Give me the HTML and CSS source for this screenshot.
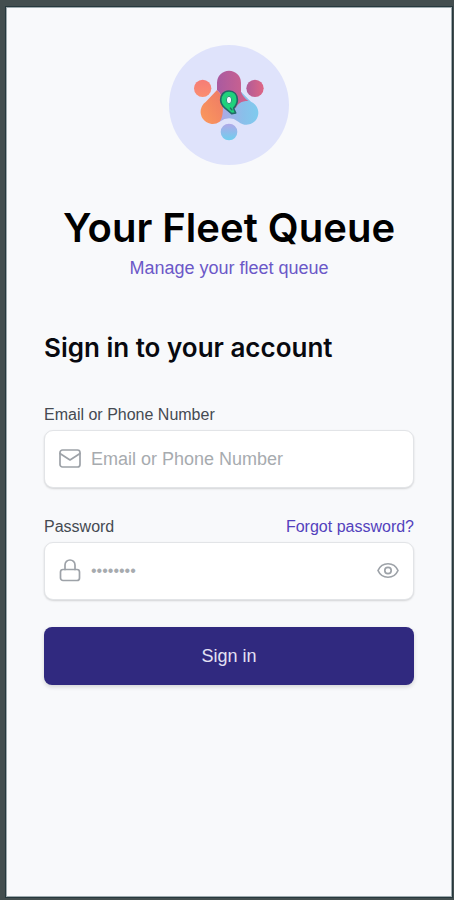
FILE: index.html
```html
<!DOCTYPE html>
<html lang="en">
<head>
<meta charset="utf-8">
<meta name="viewport" content="width=device-width, initial-scale=1">
<title>Your Fleet Queue</title>
<link rel="stylesheet" href="styles.css">
</head>
<body>
<main class="screen">
  <header class="brand">
    <svg class="logo" viewBox="30 30 360 360" aria-hidden="true">
      <defs>
        <linearGradient id="pink" x1="0" y1="0" x2="1" y2="0"><stop offset="0" stop-color="#a95aa0"/><stop offset="1" stop-color="#d0628c"/></linearGradient>
        <linearGradient id="orange" x1="1" y1="0" x2="0" y2="1"><stop offset="0" stop-color="#ee7966"/><stop offset="1" stop-color="#fb9a5c"/></linearGradient>
        <linearGradient id="blue" x1="0" y1="0" x2="1" y2="0"><stop offset="0" stop-color="#b0a6e6"/><stop offset=".6" stop-color="#8abfea"/><stop offset="1" stop-color="#7fcbee"/></linearGradient>
        <linearGradient id="rose" x1="0" y1="0" x2="1" y2="0"><stop offset="0" stop-color="#b05b98"/><stop offset="1" stop-color="#de6684"/></linearGradient>
        <linearGradient id="coral" x1="0" y1="0" x2="0" y2="1"><stop offset="0" stop-color="#f57c76"/><stop offset="1" stop-color="#fb8e70"/></linearGradient>
        <linearGradient id="sky" x1="0" y1="0" x2="0" y2="1"><stop offset="0" stop-color="#b0a8e8"/><stop offset="1" stop-color="#6fcfee"/></linearGradient>
      </defs>
      <circle cx="210" cy="210" r="180" fill="#dfe3fb"/>
      <path fill="url(#blue)" d="M246 170L276 200A36 36 0 1 1 238 260Q211 240 182 260L186 190Z"/>
      <path fill="url(#orange)" d="M174 165L140 201A36 36 0 1 0 182 260C192 248 192 228 192 205Q190 180 174 165Z"/>
      <path fill="url(#pink)" d="M174 143A36 36 0 0 1 246 143V170Q250 184 268 198C246 198 236 206 230 220L192 214Q192 180 174 165Z"/>
      <circle cx="131" cy="160" r="26" fill="url(#coral)"/>
      <circle cx="288" cy="160" r="26" fill="url(#rose)"/>
      <circle cx="210" cy="291" r="25" fill="url(#sky)"/>
      <path fill="#1fd27c" stroke="#236968" stroke-width="5" stroke-linejoin="round" d="M210 168C194 168 185 180 185 195C185 211 197 219 210 229L218 236L230 234L226 225L224 219C232 211 235 204 235 194C235 179 226 168 210 168Z"/>
      <ellipse cx="210" cy="195" rx="8" ry="11" fill="#f0f7ff" stroke="#279a74" stroke-width="3"/>
      <path d="M213 218L220 226" stroke="#236968" stroke-width="4"/>
    </svg>
    <h1 class="title">Your Fleet Queue</h1>
    <p class="tagline">Manage your fleet queue</p>
  </header>
  <form class="form">
    <h2 class="heading">Sign in to your account</h2>
    <div class="field">
      <div class="label-row"><label for="login">Email or Phone Number</label></div>
      <div class="control">
        <svg class="icon" viewBox="0 0 24 24" aria-hidden="true"><rect x="2" y="3" width="20" height="17" rx="2.5"/><path d="M2 6.500L12 13L22 6.500"/></svg>
        <input id="login" type="text" placeholder="Email or Phone Number">
      </div>
    </div>
    <div class="field">
      <div class="label-row"><label for="password">Password</label><a class="forgot" href="#">Forgot password?</a></div>
      <div class="control">
        <svg class="icon" viewBox="0 0 24 24" aria-hidden="true"><rect x="2.500" y="10.500" width="19" height="11" rx="2.5"/><path d="M7 10.500V6A5 5 0 0 1 17 6V10.500"/></svg>
        <input class="password" id="password" type="password" placeholder="••••••••">
        <button class="reveal" type="button" aria-label="Show password">
          <svg class="icon" viewBox="0 0 24 24" aria-hidden="true"><path d="M2 11.500C6 2.500 18 2.500 22 11.500C18 20.500 6 20.500 2 11.500Z"/><circle cx="12" cy="11.500" r="3.200"/></svg>
        </button>
      </div>
    </div>
    <button class="submit" type="submit">Sign in</button>
  </form>
</main>
</body>
</html>
```
FILE: styles.css
```css
* {
  box-sizing: border-box;
}

body {
  margin: 0;
  min-height: 100vh;
  display: flex;
  padding: 7px 2px 3px 6px;
  background: #434e4f;
  font-family: "Liberation Sans", Arial, sans-serif;
  color: #08090f;
}

.screen {
  flex: 1;
  min-width: 0;
  padding: 37px 37px 32px;
  background: #f8f9fb;
  border: 1px solid #9eaaae;
  box-shadow: 0 0 0 1px #26383d;
}

.brand {
  display: flex;
  flex-direction: column;
  align-items: center;
  text-align: center;
}

.logo {
  width: 120px;
  height: 120px;
}

.title {
  margin: 37px 0 0;
  font-family: Inter, sans-serif;
  font-size: 40px;
  line-height: 52px;
  font-weight: 600;
  white-space: nowrap;
  color: #000;
}

.tagline {
  margin: 2px 0 0;
  font-size: 18px;
  line-height: 24px;
  color: #6b58c8;
}

.form {
  margin-top: 48px;
}

.heading {
  margin: 0 0 35px;
  font-family: Inter, sans-serif;
  font-size: 26px;
  line-height: 40px;
  font-weight: 600;
}

.field {
  margin-bottom: 27px;
}

.label-row {
  display: flex;
  justify-content: space-between;
  margin-bottom: 3px;
  font-size: 16px;
  line-height: 24px;
  color: #454a52;
}

.forgot {
  color: #5341bd;
  text-decoration: none;
}

.control {
  display: flex;
  align-items: center;
  gap: 9px;
  height: 58px;
  padding: 0 13px;
  background: #fff;
  border: 1px solid #e2e4e7;
  border-radius: 9px;
  box-shadow: 0 1px 2px #00000026;
}

.icon {
  display: block;
  flex: none;
  width: 24px;
  height: 24px;
  fill: none;
  stroke: #9da2a8;
  stroke-width: 1.7;
  stroke-linecap: round;
  stroke-linejoin: round;
}

.control input {
  flex: 1;
  min-width: 0;
  padding: 0;
  border: 0;
  outline: 0;
  background: none;
  font: inherit;
  font-size: 18px;
  line-height: 24px;
  color: #454a52;
}

.control .password {
  font-size: 16px;
}

.control input::placeholder {
  color: #a7abaf;
  opacity: 1;
}

.reveal {
  padding: 0;
  border: 0;
  background: none;
}

.submit {
  display: block;
  width: 100%;
  height: 58px;
  border: 0;
  border-radius: 8px;
  background: #30297f;
  box-shadow: 0 2px 4px #00000026;
  font: inherit;
  font-size: 18px;
  color: #e3e1f3;
}
```
